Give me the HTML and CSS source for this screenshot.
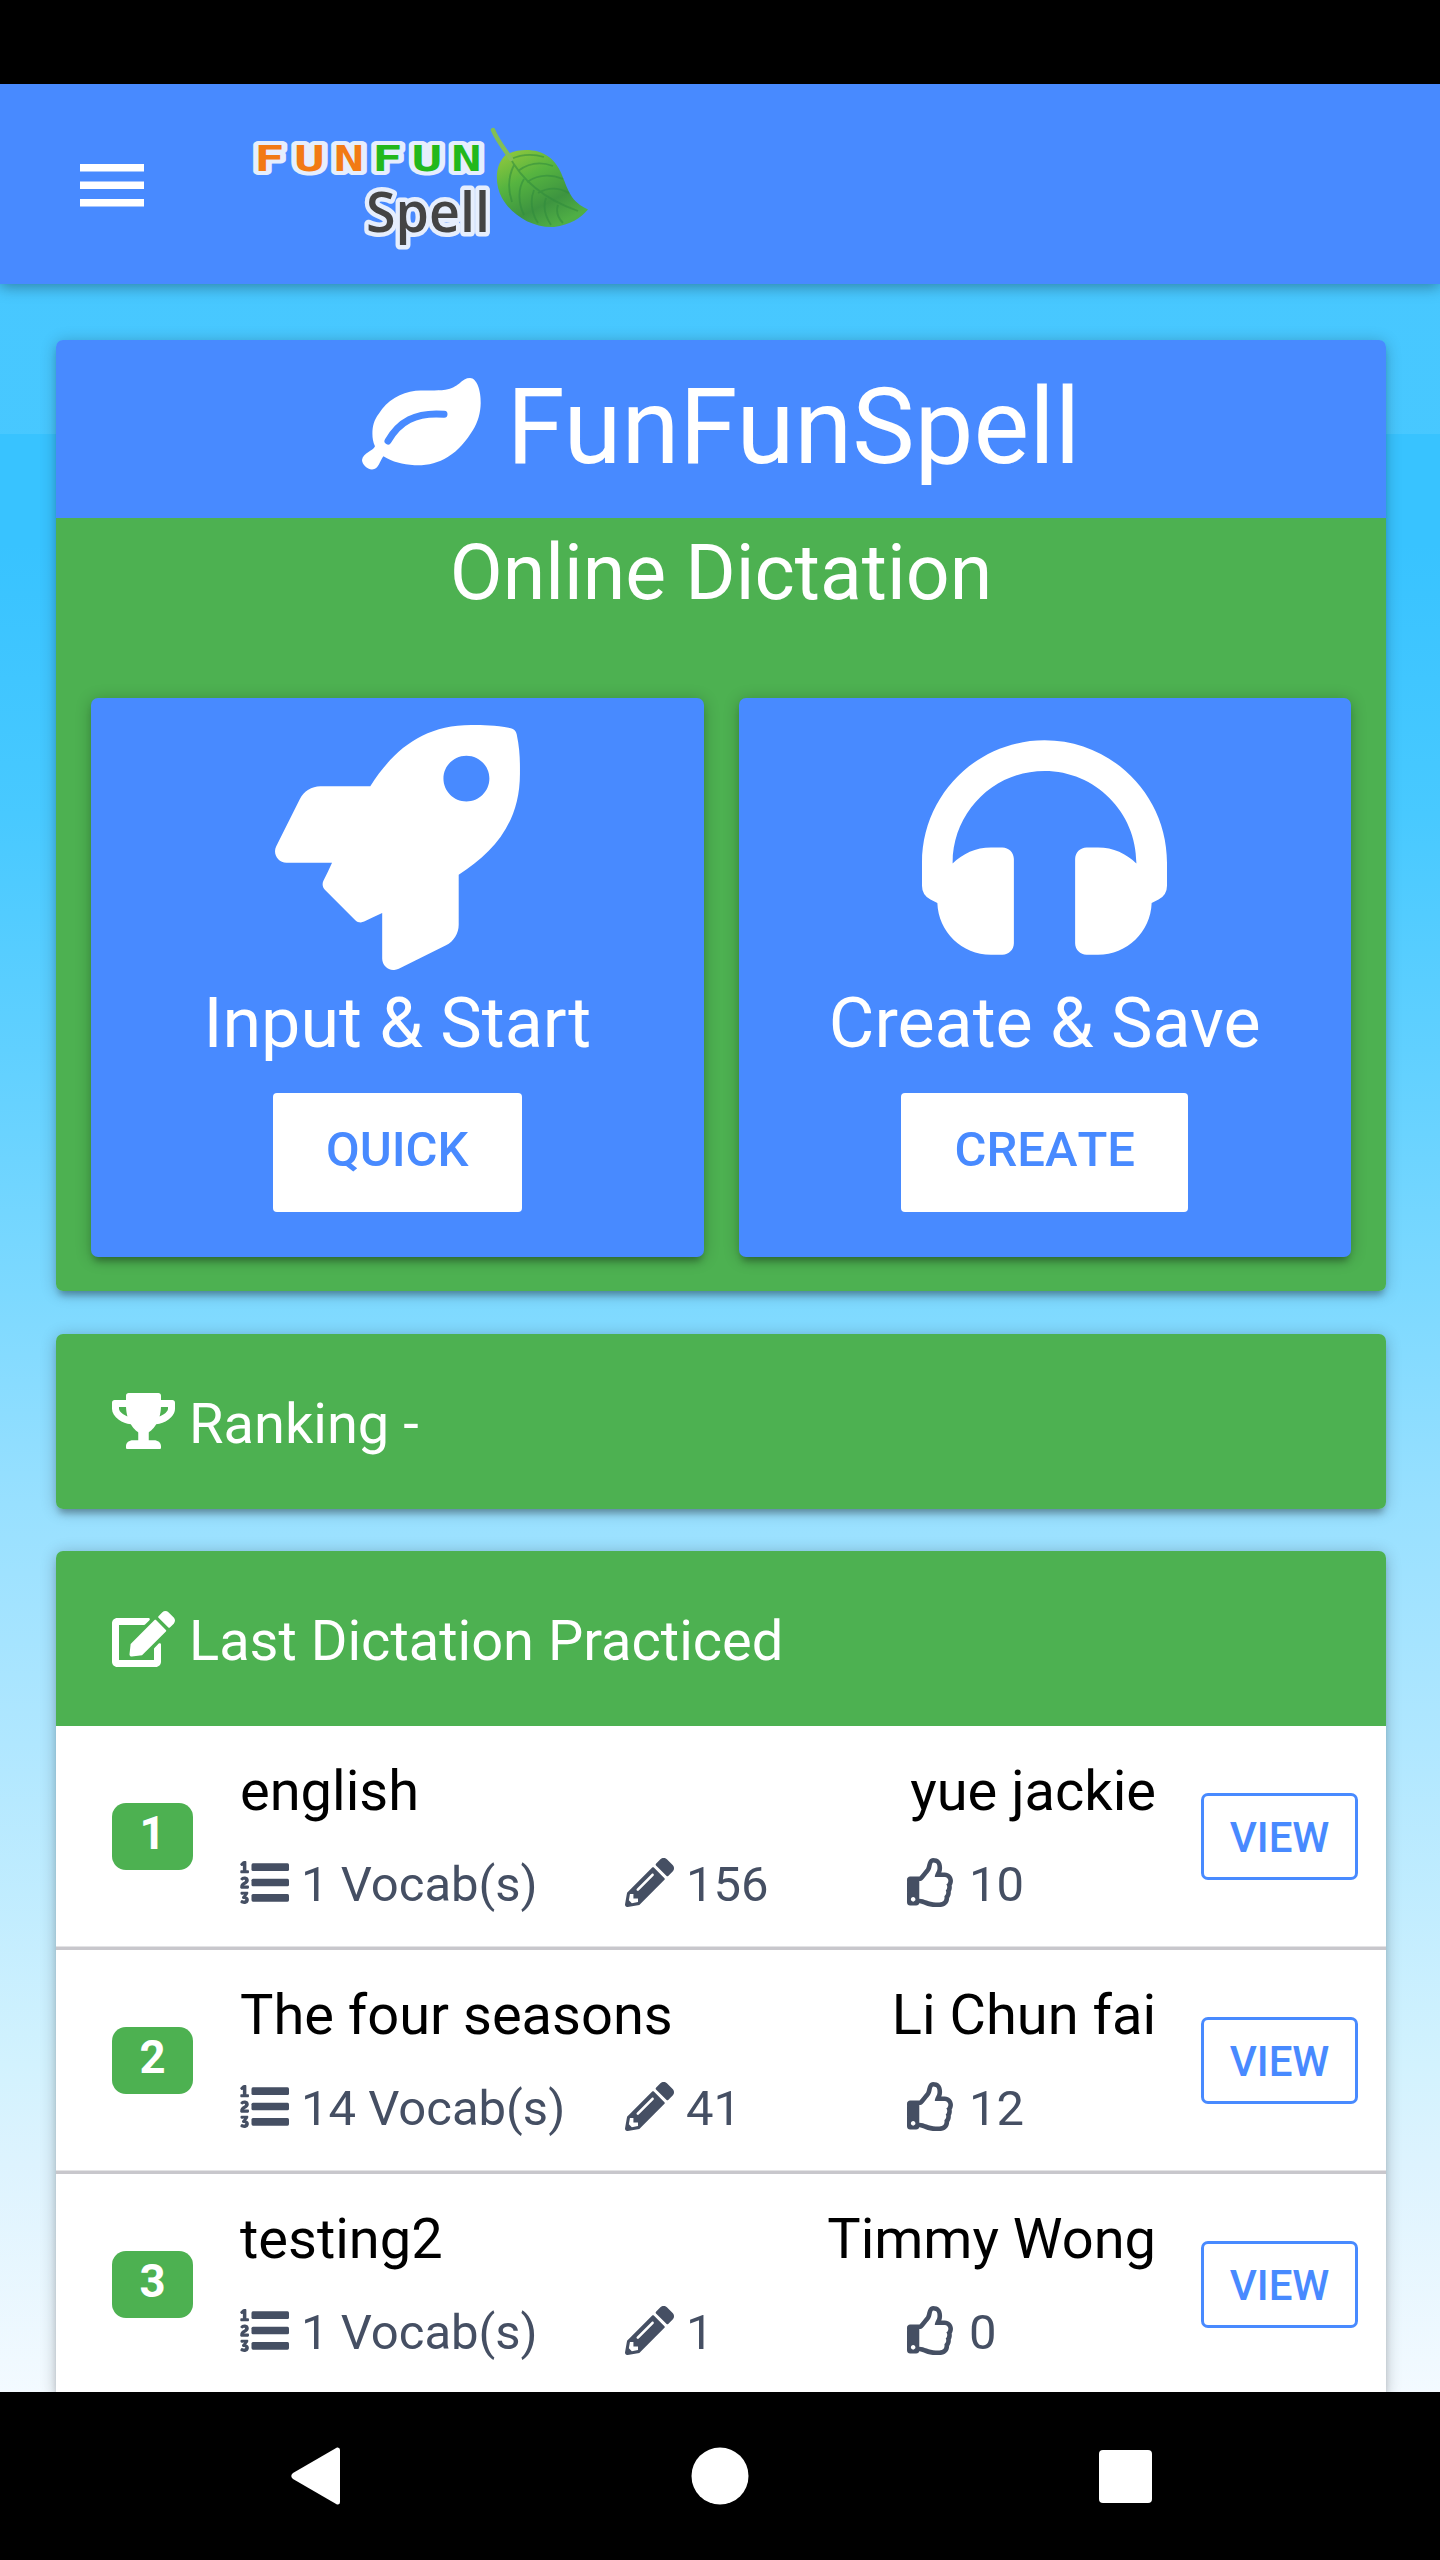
FILE: index.html
```html
<!DOCTYPE html>
<html lang="en">
<head>
<meta charset="utf-8">
<title>FunFunSpell</title>
<link rel="stylesheet" href="styles.css">
</head>
<body>
<svg class="sprite" aria-hidden="true">
  <symbol id="list" viewBox="0 0 512 512"><path d="M3.263 139.527c0-7.477 3.917-11.572 11.573-11.572h15.131V88.078c0-5.163.534-10.503.534-10.503h-.356s-1.779 2.67-2.848 3.738c-4.451 4.273-10.504 4.451-15.666-1.068l-5.518-6.231c-5.342-5.341-4.984-11.216.534-16.379l21.72-19.938C32.815 33.602 36.732 32 42.785 32H54.89c7.656 0 11.749 3.916 11.749 11.572v84.384h15.488c7.655 0 11.572 4.094 11.572 11.572v8.901c0 7.477-3.917 11.572-11.572 11.572H14.836c-7.656 0-11.573-4.095-11.573-11.572v-8.902zM2.211 304.591c0-47.278 50.955-56.383 50.955-69.165 0-7.18-5.954-8.755-9.28-8.755-3.153 0-6.479 1.051-9.455 3.852-5.079 4.903-10.507 7.004-16.111 2.451l-8.579-6.829c-5.779-4.553-7.18-9.805-2.803-15.409C13.592 201.981 26.025 192 47.387 192c19.437 0 44.476 10.506 44.476 39.573 0 38.347-46.753 46.402-48.679 56.909h39.049c7.529 0 11.557 4.027 11.557 11.382v8.755c0 7.354-4.028 11.382-11.557 11.382h-67.94c-7.005 0-12.083-4.028-12.083-11.382v-4.028zM5.654 454.61l5.603-9.28c3.853-6.654 9.105-7.004 15.584-3.152 4.903 2.101 9.63 3.152 14.359 3.152 10.155 0 14.358-3.502 14.358-8.23 0-6.654-5.604-9.106-15.934-9.106h-4.728c-5.954 0-9.28-2.101-12.258-7.88l-1.05-1.926c-2.451-4.728-1.226-9.806 2.801-14.884l5.604-7.004c6.829-8.405 12.257-13.483 12.257-13.483v-.35s-4.203 1.051-12.608 1.051H16.685c-7.53 0-11.383-4.028-11.383-11.382v-8.755c0-7.53 3.853-11.382 11.383-11.382h58.484c7.529 0 11.382 4.027 11.382 11.382v3.327c0 5.778-1.401 9.806-5.079 14.183l-17.509 20.137c19.611 5.078 28.716 20.487 28.716 34.845 0 21.363-14.358 44.126-48.503 44.126-16.636 0-28.192-4.728-35.896-9.455-5.779-4.202-6.304-9.805-2.626-15.934z"/><rect x="120" y="56" width="392" height="80" rx="16"/><rect x="120" y="216" width="392" height="80" rx="16"/><rect x="120" y="376" width="392" height="80" rx="16"/></symbol>
  <symbol id="pencil" viewBox="0 0 512 512"><path d="M497.9 142.1l-46.1 46.1c-4.7 4.7-12.3 4.7-17 0l-111-111c-4.7-4.7-4.7-12.3 0-17l46.1-46.1c18.7-18.7 49.1-18.7 67.9 0l60.1 60.1c18.8 18.7 18.8 49.1 0 67.9zM284.2 99.8L21.6 362.4.4 483.9c-2.9 16.4 11.4 30.6 27.8 27.8l121.5-21.3 262.6-262.6c4.7-4.7 4.7-12.3 0-17l-111-111c-4.8-4.7-12.4-4.7-17.1 0zM124.1 339.9c-5.5-5.5-5.5-14.3 0-19.8l154-154c5.5-5.5 14.3-5.5 19.8 0s5.5 14.3 0 19.8l-154 154c-5.5 5.5-14.3 5.5-19.8 0zM88 424h48v36.3l-64.5 11.3-31.1-31.1L51.7 376H88v48z"/></symbol>
  <symbol id="thumb" viewBox="0 0 480 512"><path d="M466.27 286.69C475.04 271.84 480 256 480 236.85c0-44.015-37.218-85.58-85.82-85.58H357.7c4.92-12.81 8.85-28.13 8.85-46.54C366.55 31.936 328.86 0 271.28 0c-61.607 0-58.093 94.933-71.76 108.6-22.747 22.747-49.615 66.447-68.76 83.4H32c-17.673 0-32 14.327-32 32v240c0 17.673 14.327 32 32 32h64c14.893 0 27.408-10.174 30.978-23.95 44.509 1.001 75.06 39.94 177.802 39.94 7.22 0 15.22.01 22.22.01 77.117 0 111.986-39.423 112.94-95.33 13.319-18.425 20.299-43.122 17.34-66.99 9.854-18.452 13.664-40.343 8.99-62.99zm-61.75 53.83c12.56 21.13 1.26 49.41-13.94 57.57 7.7 48.78-17.608 65.9-53.12 65.9h-37.82c-71.639 0-118.029-37.82-171.64-37.82V240h10.92c28.36 0 67.98-70.89 94.54-97.46 28.36-28.36 18.91-75.63 37.82-94.54 47.27 0 47.27 32.98 47.27 56.73 0 39.17-28.36 56.72-28.36 94.54h103.99c21.11 0 37.73 18.91 37.82 37.82.09 18.9-12.82 37.81-22.27 37.81 13.489 14.555 16.371 45.236-5.21 65.62zM88 432c0 13.255-10.745 24-24 24s-24-10.745-24-24 10.745-24 24-24 24 10.745 24 24z"/></symbol>
</svg>
<div class="statusbar"></div>
<header class="toolbar">
  <svg class="menu" viewBox="0 0 64 48"><path d="M0 4h64v7.5H0zM0 21.5h64v7.5H0zM0 39h64v7.500H0z"/></svg>
  <svg class="logo" viewBox="250 120 340 128">
    <defs>
      <linearGradient id="leafFill" x1="0" y1="0" x2=".6" y2="1"><stop offset="0" stop-color="#9acb3c"/><stop offset=".4" stop-color="#56b440"/><stop offset=".75" stop-color="#3d9440"/><stop offset="1" stop-color="#4fae45"/></linearGradient>
    </defs>
    <text class="logo-fun" transform="scale(1.4 1)" y="171" x="192.500 221 249.300 276.800 305 333.200"><tspan class="orange">FUN</tspan><tspan class="green">FUN</tspan></text>
    <text class="logo-spell" x="366" y="232" textLength="124" lengthAdjust="spacingAndGlyphs">Spell</text>
    <path d="M510 153C520 149 537 148 549 157C563 168 563 183 572 197C577 204 583 207 588 209.500C581 218 570 225 554 227C531 228 511 214 502 198C494 183 495 163 507 154Z" fill="url(#leafFill)"/>
    <path d="M508 154C518 174 538 197 578 211M518 171C530 162 542 162 553 166M527 182C540 173 553 175 563 179M538 193C550 186 560 188 569 193M511 159C522 154 534 154 544 157M514 165C508 177 508 190 512 202M524 179C517 190 519 205 524 215M534 190C529 202 533 216 538 223M546 198C542 209 547 219 551 225M558 205C555 214 560 220 563 223" class="logo-veins"/>
    <path d="M493 130C497 140 503 147 511 159" class="logo-stem"/>
  </svg>
</header>
<main class="content">
  <section class="card">
    <h1 class="title">
      <svg class="leaf" viewBox="0 0 119 92"><path d="M97 5.700C101 2 104 0 108 0C115 0 119 13 118.700 25C118.500 35 116 44 111 52C104 63 97 72 85.700 79C76 85 65 87.800 52.600 87.300C40 86.500 31 84 21.400 78.300C18 82 17 91.500 10 91.500C5 91.500 0 86 0 82C1 75 11 73 13 68.300C11 64 10.400 60 10.400 55.700C10.400 48 12 42 16.800 35.700C21 29 26 24 33 19.700C39 16 46 13.500 53.500 12.700C63 12 74 13 83.400 11.700C90 10.500 94 8 97 5.700Z"/><path class="leaf-vein" d="M26 63C37 44 53 34 82 36.300"/></svg>
      <span>FunFunSpell</span>
    </h1>
    <div class="hero">
      <h2 class="subtitle">Online Dictation</h2>
      <div class="tiles">
        <div class="tile">
          <svg class="tile-icon" viewBox="0 0 512 512"><path d="M505.1 19.1C503.8 13 499 8.200 492.900 6.900 460.700 0 435.500 0 410.400 0 307.200 0 245.300 55.200 199.100 128H94.900c-18.200 0-34.800 10.300-42.900 26.500L2.600 253.300c-8 16 3.600 34.700 21.500 34.700h95.100c-5.900 12.800-11.900 25.500-18 37.700-3.100 6.200-1.900 13.600 3 18.500l63.600 63.600c4.900 4.900 12.300 6.100 18.500 3 12.200-6.100 24.900-12 37.700-17.900V488c0 17.800 18.800 29.400 34.700 21.500l98.700-49.400c16.300-8.100 26.500-24.800 26.500-42.900V312.800c72.600-46.300 128-108.400 128-211.100.1-25.200.1-50.400-6.800-82.600zM400 160c-26.500 0-48-21.500-48-48s21.500-48 48-48 48 21.500 48 48-21.500 48-48 48z"/></svg>
          <h3>Input &amp; Start</h3>
          <button class="btn-light">QUICK</button>
        </div>
        <div class="tile">
          <svg class="tile-icon" viewBox="0 0 512 512"><path d="M256 32C114.520 32 0 146.497 0 288v48a32 32 0 0 0 17.689 28.622l14.383 7.191C34.083 431.903 83.421 480 144 480h24c13.255 0 24-10.745 24-24V280c0-13.255-10.745-24-24-24h-24c-31.342 0-59.671 12.879-80 33.627V288c0-105.869 86.131-192 192-192s192 86.131 192 192v1.627C427.671 268.879 399.342 256 368 256h-24c-13.255 0-24 10.745-24 24v176c0 13.255 10.745 24 24 24h24c60.579 0 109.917-48.098 111.928-108.187l14.382-7.191A32 32 0 0 0 512 336v-48c0-141.479-114.496-256-256-256z"/></svg>
          <h3>Create &amp; Save</h3>
          <button class="btn-light">CREATE</button>
        </div>
      </div>
    </div>
  </section>

  <section class="card">
    <h2 class="card-head">
      <svg viewBox="0 0 576 512"><path d="M552 64H448V24c0-13.300-10.700-24-24-24H152c-13.300 0-24 10.700-24 24v40H24C10.700 64 0 74.700 0 88v56c0 35.700 22.500 72.400 61.900 100.700 31.500 22.700 69.800 37.100 110 41.700C203.300 338.500 240 360 240 360v72h-48c-35.300 0-64 20.700-64 56v12c0 6.600 5.400 12 12 12h296c6.600 0 12-5.400 12-12v-12c0-35.300-28.700-56-64-56h-48v-72s36.700-21.500 68.100-73.600c40.300-4.600 78.600-19 110-41.700 39.300-28.300 61.900-65 61.900-100.700V88c0-13.300-10.700-24-24-24zM99.300 192.800C74.900 175.200 64 155.600 64 144v-16h64.200c1 32.600 5.800 61.200 12.800 86.200-15.100-5.200-29.200-12.400-41.700-21.400zM512 144c0 16.100-17.700 36.100-35.300 48.800-12.500 9-26.700 16.200-41.800 21.400 7-25 11.800-53.600 12.800-86.200H512v16z"/></svg>
      <span>Ranking -</span>
    </h2>
  </section>

  <section class="card">
    <h2 class="card-head">
      <svg viewBox="0 0 576 512"><path d="M402.600 83.200l90.200 90.200c3.800 3.800 3.800 10 0 13.800L274.400 405.600l-92.800 10.300c-12.400 1.400-22.900-9.100-21.500-21.500l10.300-92.800L388.800 83.200c3.800-3.800 10-3.800 13.800 0zm162-22.900l-48.800-48.800c-15.200-15.200-39.900-15.200-55.200 0l-35.400 35.400c-3.800 3.800-3.800 10 0 13.800l90.200 90.200c3.800 3.800 10 3.800 13.800 0l35.400-35.400c15.200-15.300 15.200-40 0-55.200zM384 346.200V448H64V128h229.800c3.200 0 6.200-1.300 8.500-3.500l40-40c7.600-7.600 2.200-20.500-8.500-20.500H48C21.500 64 0 85.500 0 112v352c0 26.500 21.500 48 48 48h352c26.500 0 48-21.500 48-48V306.200c0-10.700-12.900-16-20.500-8.500l-40 40c-2.200 2.300-3.500 5.300-3.500 8.500z"/></svg>
      <span>Last Dictation Practiced</span>
    </h2>
    <div class="row">
      <span class="badge">1</span>
      <div class="info">
        <div class="names"><span>english</span><span>yue jackie</span></div>
        <div class="stats">
          <span><svg class="icon"><use href="#list"/></svg>1 Vocab(s)</span>
          <span><svg class="icon"><use href="#pencil"/></svg>156</span>
          <span><svg class="icon thumb"><use href="#thumb"/></svg>10</span>
        </div>
      </div>
      <button class="btn-view">VIEW</button>
    </div>
    <div class="row">
      <span class="badge">2</span>
      <div class="info">
        <div class="names"><span>The four seasons</span><span>Li Chun fai</span></div>
        <div class="stats">
          <span><svg class="icon"><use href="#list"/></svg>14 Vocab(s)</span>
          <span><svg class="icon"><use href="#pencil"/></svg>41</span>
          <span><svg class="icon thumb"><use href="#thumb"/></svg>12</span>
        </div>
      </div>
      <button class="btn-view">VIEW</button>
    </div>
    <div class="row">
      <span class="badge">3</span>
      <div class="info">
        <div class="names"><span>testing2</span><span>Timmy Wong</span></div>
        <div class="stats">
          <span><svg class="icon"><use href="#list"/></svg>1 Vocab(s)</span>
          <span><svg class="icon"><use href="#pencil"/></svg>1</span>
          <span><svg class="icon thumb"><use href="#thumb"/></svg>0</span>
        </div>
      </div>
      <button class="btn-view">VIEW</button>
    </div>
  </section>
</main>
<nav class="navbar">
  <svg class="nav-back" viewBox="0 0 49 58"><path d="M46 .5Q49 0 49 3V55Q49 58 46 57.500L2 32Q-1.500 29 2 26Z"/></svg>
  <svg class="nav-home" viewBox="0 0 58 58"><circle cx="29" cy="29" r="28.500"/></svg>
  <svg class="nav-recent" viewBox="0 0 53 53"><rect width="53" height="53" rx="4"/></svg>
</nav>
</body>
</html>
```
FILE: styles.css
```css
* { box-sizing: border-box; }

body {
  margin: 0;
  width: 1440px;
  height: 2560px;
  overflow: hidden;
  display: flex;
  flex-direction: column;
  background: #000;
  font-family: Roboto, "Liberation Sans", sans-serif;
  font-weight: 400;
}

h1, h2, h3 { margin: 0; font-weight: 400; }
button { font-family: inherit; font-weight: 500; color: #488aff; padding: 0; }
svg { display: block; fill: currentColor; flex: none; }
.sprite { display: none; }

.statusbar { flex: none; height: 84px; }

.toolbar {
  position: relative;
  z-index: 1;
  flex: none;
  height: 200px;
  padding-left: 80px;
  display: flex;
  align-items: center;
  gap: 106px;
  background: #488aff;
  color: #fff;
  box-shadow: 0 3px 14px rgba(0, 0, 0, .35);
}
.menu { width: 64px; height: 48px; }
.logo { width: 340px; height: 128px; overflow: visible; }
.logo text {
  stroke: #e6eefd;
  paint-order: stroke;
  stroke-linejoin: round;
}
.logo-fun {
  font: 700 36px "DejaVu Sans Mono", monospace;
  text-anchor: middle;
  stroke-width: 8px;
}
.orange { fill: #f27a14; }
.green { fill: #22b81c; }
.logo-spell {
  font: 600 56px "Open Sans", sans-serif;
  fill: #444;
  stroke-width: 9px;
}
.logo-veins { fill: none; stroke: #2f8a3c; stroke-opacity: .55; stroke-width: 1.8px; }
.logo-stem { fill: none; stroke: #83bf55; stroke-width: 4.500px; stroke-linecap: round; }

.content {
  flex: none;
  height: 2108px;
  overflow: hidden;
  padding: 56px 54px 0 56px;
  background:
    linear-gradient(rgba(255, 255, 255, .08), rgba(255, 255, 255, .08)) 0 0 / 100% 150px no-repeat,
    linear-gradient(#38c3ff 0, #38c3ff 260px, #48c9ff 530px, #60d0ff 766px, #7dd9ff 1010px, #98e0ff 1220px, #b0e7ff 1460px, #d2f2fe 1780px, #ddf3fe 1880px, #f3faff 2108px);
}

.card {
  border-radius: 7px;
  margin-bottom: 42.500px;
  color: #fff;
  box-shadow: 0 7px 7px -3px rgba(0, 0, 0, .28), 0 2px 16px rgba(0, 0, 0, .24);
}

.title {
  height: 178px;
  border-radius: 7px 7px 0 0;
  background: #488aff;
  display: flex;
  align-items: center;
  justify-content: center;
  gap: 26px;
  font-size: 105px;
}
.title span { padding-bottom: 3px; }
.leaf { width: 119px; height: 92px; margin-bottom: 10px; }
.leaf-vein { fill: none; stroke: #488aff; stroke-width: 7px; stroke-linecap: round; }

.hero {
  height: 773px;
  padding: 1px 35px 0;
  border-radius: 0 0 7px 7px;
  background: #4db151;
}
.subtitle { font-size: 77px; line-height: 108px; text-align: center; }
.tiles { display: grid; grid-template-columns: 1fr 1fr; gap: 35px; margin-top: 71px; }
.tile {
  height: 559px;
  padding-top: 27px;
  border-radius: 7px;
  background: #488aff;
  display: flex;
  flex-direction: column;
  align-items: center;
  box-shadow: 0 7px 7px -3px rgba(0, 0, 0, .28), 0 2px 16px rgba(0, 0, 0, .24);
}
.tile-icon { width: 245px; height: 245px; }
.tile h3 { font-size: 70px; line-height: 106px; }
.btn-light {
  height: 119px;
  margin-top: 17px;
  padding: 0 53px 6px;
  border: 0;
  border-radius: 4px;
  background: #fff;
  font-size: 49px;
  font-kerning: none;
}

.card-head {
  height: 175px;
  padding-left: 56px;
  border-radius: 7px;
  background: #4db151;
  display: flex;
  align-items: center;
  gap: 14px;
  font-size: 56px;
}
.card-head:not(:last-child) { border-radius: 7px 7px 0 0; }
.card-head span { padding-top: 5px; }
.card-head svg { width: 63px; height: 56px; }

.row {
  height: 224px;
  padding: 0 28px 0 56px;
  display: flex;
  align-items: center;
  background: #fff;
  border-bottom: 3px solid #c8c7cc;
  box-shadow: inset 0 -1px #e3e3e5;
  color: #000;
}
.badge {
  width: 81px;
  height: 67px;
  margin-right: 47px;
  border-radius: 14px;
  background: #4db151;
  color: #fff;
  font-size: 45.500px;
  font-weight: 700;
  line-height: 62px;
  text-align: center;
}
.info { width: 916px; padding-bottom: 3px; }
.names { display: flex; justify-content: space-between; font-size: 56px; line-height: 80px; }
.stats {
  display: grid;
  grid-template-columns: 385px 282px 1fr;
  margin-top: 19px;
  color: #454f63;
  font-size: 49px;
  line-height: 70px;
}
.stats span { display: flex; align-items: center; gap: 12px; white-space: nowrap; }
.icon { width: 49px; height: 49px; margin-bottom: 5px; }
.thumb { width: 46px; margin-right: 4px; }
.btn-view {
  width: 157px;
  height: 87px;
  margin-left: auto;
  padding-top: 2px;
  border: 3px solid #488aff;
  border-radius: 7px;
  background: #fff;
  font-size: 42px;
}

.navbar {
  flex: 1;
  position: relative;
  padding: 0 288px 0 291px;
  display: flex;
  align-items: center;
  justify-content: space-between;
  background: #000;
  color: #fff;
}
.nav-back { width: 49px; height: 58px; }
.nav-home { width: 58px; height: 58px; }
.nav-recent { width: 53px; height: 53px; }
```
